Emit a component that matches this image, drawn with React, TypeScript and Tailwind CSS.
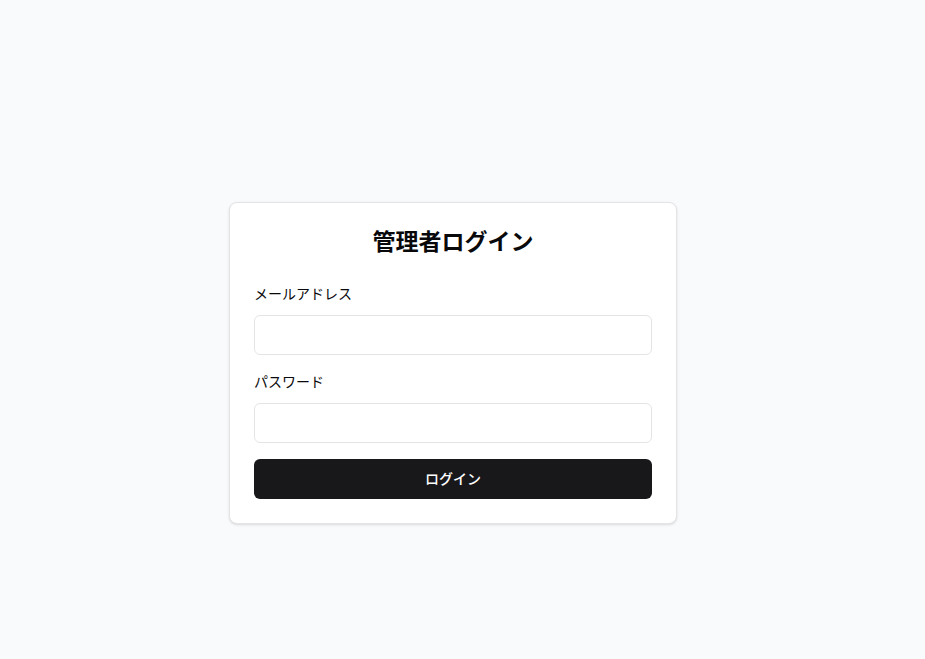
import React from 'react';

const App: React.FC = () => {
  return (
    <div
      className="min-h-screen w-full bg-[#f9fafb] flex justify-center pt-[202px] pr-[19px]"
      style={{ fontFamily: '"Noto Sans", "Noto Sans CJK JP", sans-serif' }}
    >
      {/* Login card */}
      <div className="w-[448px] h-fit bg-white border border-[#e4e4e7] rounded-lg shadow-sm p-6">
        <h1 className="text-[23px] leading-8 font-bold text-center text-[#09090b] -mt-[2px] mb-[27px]">管理者ログイン</h1>
        <form className="flex flex-col" onSubmit={(e) => e.preventDefault()}>
          <label className="block text-sm text-[#09090b] mb-[11px]">メールアドレス</label>
          <input
            type="email"
            className="h-10 w-full rounded-md border border-[#e4e4e7] bg-white px-3 text-sm outline-none"
          />
          <label className="block text-sm text-[#09090b] mt-[17px] mb-[11px]">パスワード</label>
          <input
            type="password"
            className="h-10 w-full rounded-md border border-[#e4e4e7] bg-white px-3 text-sm outline-none"
          />
          <button
            type="submit"
            className="mt-4 h-10 w-full rounded-md bg-[#18181b] text-white text-sm font-medium"
          >
            ログイン
          </button>
        </form>
      </div>
    </div>
  );
};

export default App;
